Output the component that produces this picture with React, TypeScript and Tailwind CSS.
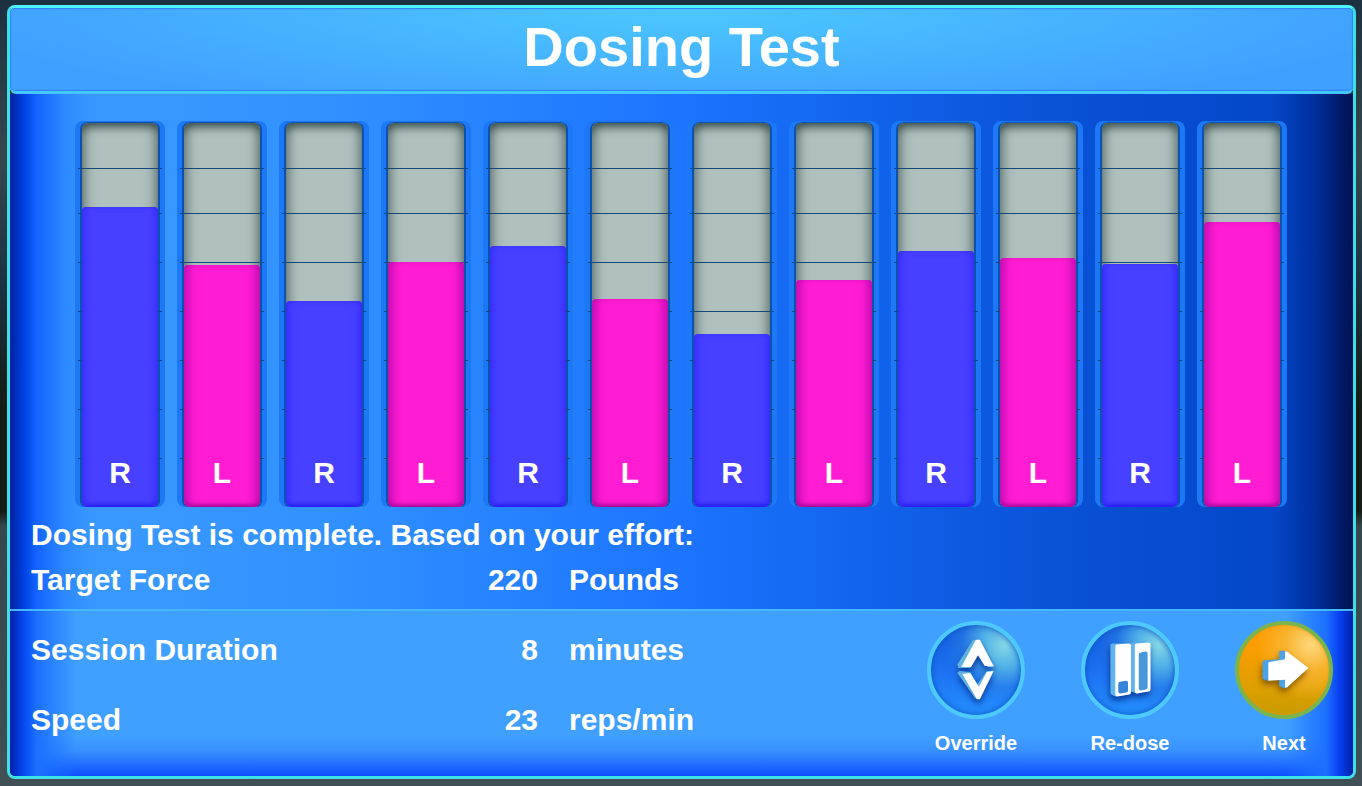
import React from "react";

type Side = "R" | "L";

interface Bar {
  side: Side;
  level: number;
}

const BARS: Bar[] = [
  { side: "R", level: 300 },
  { side: "L", level: 242 },
  { side: "R", level: 206 },
  { side: "L", level: 245 },
  { side: "R", level: 261 },
  { side: "L", level: 208 },
  { side: "R", level: 173 },
  { side: "L", level: 227 },
  { side: "R", level: 256 },
  { side: "L", level: 249 },
  { side: "R", level: 243 },
  { side: "L", level: 285 },
];

const MAX_LEVEL = 384;
const GRID_LINES = [338, 293, 244, 195, 146, 97, 48];

const fillStyles: Record<Side, string> = {
  R: "bg-[#4840ff] shadow-[inset_6px_0_7px_-3px_#342cff,inset_-6px_0_7px_-3px_#342cff,inset_0_-5px_4px_-3px_#2010e8]",
  L: "bg-[#ff1cd2] shadow-[inset_10px_0_10px_-6px_#b80cae,inset_-10px_0_10px_-6px_#b80cae,inset_0_-5px_4px_-3px_#900888]",
};

function EffortBar({ side, level }: Bar) {
  return (
    <div className="min-w-0 flex-1 rounded-lg bg-[#1c78f4] px-[7px] pt-[2px]">
      <div className="relative h-96 rounded-md bg-[#b0c0bf] shadow-[-2px_0_0_#0c50b0,2px_0_0_#0c50b0,0_-1px_1px_#0c50b0]">
        <div className="absolute inset-0 rounded-md shadow-[inset_0_9px_10px_-5px_#384c4a,inset_12px_0_12px_-9px_#647976,inset_-12px_0_12px_-9px_#647976]" />
        {GRID_LINES.map((line) => (
          <span
            key={line}
            className="absolute -inset-x-[4px] h-px bg-[#12487c]"
            style={{ bottom: `${(line / MAX_LEVEL) * 100}%` }}
          />
        ))}
        <div
          className={`absolute inset-x-0 bottom-0 flex items-end justify-center rounded-t-[4px] rounded-b-md pb-4 text-3xl font-bold ${fillStyles[side]}`}
          style={{ height: `${(level / MAX_LEVEL) * 100}%` }}
        >
          {side}
        </div>
      </div>
    </div>
  );
}

interface ResultProps {
  label: string;
  value: string;
  unit: string;
}

function Result({ label, value, unit }: ResultProps) {
  return (
    <dl className="grid grid-cols-[431px_76px_1fr] text-3xl">
      <dt>{label}</dt>
      <dd className="text-right">{value}</dd>
      <dd className="pl-[31px]">{unit}</dd>
    </dl>
  );
}

function OverrideIcon() {
  return (
    <svg viewBox="3 3 92 92" className="size-full drop-shadow-[0_4px_3px_#0a3fa0]" aria-hidden="true">
      <path d="M46 18 L53 18 L52 32 L43 47 L31 47 L30 43 Z" fill="#62b4e0" />
      <path d="M52 30 L61 46 L67 46 L67 44 Z" fill="#8cd0ee" />
      <path d="M49 18 L53 18 L67 45 L58 45 L51 34 L44 46 L34 46 Z" fill="#fff" />
      <path d="M30 52 L32 50 L43 51 L52 66 L52 79 L48 78 Z" fill="#62b4e0" />
      <path d="M60 50 L67 50 L60 56 L52 67 L50 64 Z" fill="#62b4e0" />
      <path d="M35 53 L43 52 L52 66 L60 51 L67 50 L53 79 L50 79 Z" fill="#fff" />
    </svg>
  );
}

function RedoseIcon() {
  return (
    <svg viewBox="3 3 92 92" className="size-full drop-shadow-[-1px_4px_3px_#0a3fa0]" aria-hidden="true">
      <path d="M31 22 L48 22 L48 74 L34 76 L30 74 Q29 73 29 72 L29 24 Q29 22 31 22 Z" fill="#62b4ec" />
      <path d="M52 21 L66 21 L66 70 L56 73 L50 71 L50 22 Z" fill="#62b4ec" />
      <path d="M35 23 L48 22 Q50 22 50 24 L50 72 Q50 74 48 74 L36 76 Q34 76 34 74 L34 25 Q34 23 35 23 Z" fill="#fff" />
      <path d="M56 22 L68 21 Q70 21 70 23 L70 69 Q70 71 68 71 L56 73 Q54 73 54 71 L54 24 Q54 22 56 22 Z" fill="#fff" />
      <path d="M39 61 L45 60 Q47 60 47 62 L47 70 Q47 72 45 72 L39 73 Q37 73 37 71 L37 63 Q37 61 39 61 Z" fill="#3484dc" />
      <path d="M60 31 L65 30 Q67 30 67 32 L67 67 Q67 69 65 69 L60 70 Q58 70 58 68 L58 33 Q58 31 60 31 Z" fill="#4698d8" />
    </svg>
  );
}

function NextIcon() {
  return (
    <svg viewBox="3 3 92 92" className="size-full drop-shadow-[-1px_4px_3px_#8a5a00]" aria-hidden="true">
      <path d="M27 41 Q27 39 29 39 L44 38 L44 30 L47 29 L52 30 L52 67 L49 68 L44 65 L44 58 L32 60 L27 58 Z" fill="#4ba3e6" />
      <path d="M33 41 L50 38 L50 30 L52 30 L74 47 L52 67 L50 67 L50 59 L33 60 Z" fill="#fff" />
    </svg>
  );
}

const faces = {
  blue: "border-[#4ccafe] bg-[radial-gradient(circle_at_82%_22%,#84d8e4_0%,#50b0e8_22%,#2c80e480_42%,transparent_58%),linear-gradient(#1460dc,#1c70f0_50%,#2490ff)] shadow-[inset_0_0_6px_#1050c0]",
  orange:
    "border-[#7cb44c] bg-[radial-gradient(circle_at_80%_22%,#ffd87c_0%,#f8b430_25%,transparent_55%),linear-gradient(#ff9c00_20%,#e0a000_65%,#c89c00)] shadow-[inset_0_0_3px_#ff9000]",
};

interface ActionProps {
  label: string;
  face: keyof typeof faces;
  children: React.ReactNode;
}

function Action({ label, face, children }: ActionProps) {
  return (
    <button type="button" className="flex w-[98px] flex-col items-center gap-2.5 text-xl font-bold">
      <span className={`block size-[98px] rounded-full border-4 ${faces[face]}`}>
        {children}
      </span>
      {label}
    </button>
  );
}

export default function App() {
  return (
    <div className="flex min-h-screen flex-col bg-[linear-gradient(#1c3040,#34484c_20%,#1c3444_35%,#141c14_52%,#141c14_65%,#34484c_67%,#405054)] pt-[5px] pr-[6px] pb-[7px] pl-[7px] font-['Liberation_Sans',Arial,sans-serif] font-bold text-white">
      <main className="flex flex-1 flex-col overflow-hidden rounded-lg border-[3px] border-[#3ce0e8] border-t-[#4cf4fa]">
        <header className="flex h-[86px] items-center justify-center rounded-b-md border-b-[3px] border-[#42c8ff] bg-[radial-gradient(ellipse_55%_130%_at_50%_0%,#4cc8ff,#40a0ff)] pb-1.5 shadow-[inset_0_0_1px_1px_#3080ff]">
          <h1 className="text-[56px] leading-none">Dosing Test</h1>
        </header>

        <section className="flex flex-1 flex-col bg-[linear-gradient(90deg,#0020a0,#0040e0_1%,#1464ff_2%,#2c88ff_4%,#3898ff_6%,#3898ff_12%,#3090ff_25%,#1c74ff_50%,#1060e8_66%,#0850d4_80%,#0448c8_94%,#0030a0_97%,#001050)] px-[21px] pt-[27px]">
          <div className="flex gap-3 pr-[45px] pl-11">
            {BARS.map((bar, i) => (
              <EffortBar key={i} {...bar} />
            ))}
          </div>
          <p className="mt-2.5 text-3xl">Dosing Test is complete. Based on your effort:</p>
          <div className="mt-[9px]">
            <Result label="Target Force" value="220" unit="Pounds" />
          </div>
        </section>

        <footer className="flex h-[167px] justify-between border-t-2 border-[#44b8ff] bg-[linear-gradient(90deg,#0020a8,#0848f0_1%,#1c70ff_2%,#40a0ff00_5%,#40a0ff00_95%,#1c70ff_98%,#0840f0_99%,#0020a8),linear-gradient(#40a0ff_75%,#3890ff_85%,#0c50ff)] pr-5 pl-[21px]">
          <div className="flex flex-col gap-[34px] pt-[21px]">
            <Result label="Session Duration" value="8" unit="minutes" />
            <Result label="Speed" value="23" unit="reps/min" />
          </div>
          <nav className="flex items-start gap-14 pt-2.5">
            <Action label="Override" face="blue">
              <OverrideIcon />
            </Action>
            <Action label="Re-dose" face="blue">
              <RedoseIcon />
            </Action>
            <Action label="Next" face="orange">
              <NextIcon />
            </Action>
          </nav>
        </footer>
      </main>
    </div>
  );
}
